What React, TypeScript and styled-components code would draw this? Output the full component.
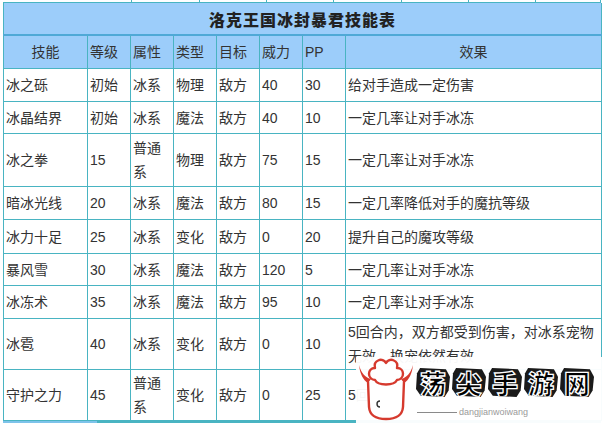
import React from "react";
import styled, { createGlobalStyle } from "styled-components";

const TEAL = "#49b4c2";
const BLUE_BG = "#9ccdfa";

const GlobalStyle = createGlobalStyle`
  html, body { margin: 0; padding: 0; background: #fff; }
  body { font-family: "Liberation Sans", "Noto Sans CJK SC", sans-serif; }
`;

const Page = styled.div`
  position: relative;
  width: 608px;
  height: 423px;
  overflow: hidden;
  background: #fff;
`;

const Tail = styled.div`
  display: flex;
  height: 2px;
  margin-left: 3px;
  width: 598px;
  border-bottom: 1px solid ${TEAL};
`;

const TailCell = styled.div<{ $w: number }>`
  flex: 0 0 ${(p) => p.$w}px;
  border-right: 1px solid ${TEAL};
  box-sizing: border-box;
`;

const Table = styled.table`
  border-collapse: collapse;
  table-layout: fixed;
  width: 598px;
  margin-left: 3px;
  font-size: 14px;
  color: #333;
`;

const TitleCell = styled.th`
  background: ${BLUE_BG};
  height: 31px;
  padding: 0;
  font-size: 16px;
  font-weight: 900;
  letter-spacing: 1px;
  color: #222;
  text-align: center;
  border: 1px solid ${TEAL};
  border-top: none;
  border-bottom: 2px solid #4fa9d6;
  font-family: "Noto Sans CJK SC", sans-serif;
`;

const HeadCell = styled.th<{ $center?: boolean }>`
  background: ${BLUE_BG};
  height: 32px;
  padding: 0 2px;
  font-weight: normal;
  color: #333;
  text-align: ${(p) => (p.$center ? "center" : "left")};
  border: 1px solid ${TEAL};
  line-height: 24px;
`;

const Row = styled.tr<{ $h: number }>`
  height: ${(p) => p.$h}px;
`;

const Cell = styled.td`
  padding: 1px 2px;
  border: 1px solid ${TEAL};
  line-height: 24px;
  vertical-align: middle;
  word-break: break-all;
  background: #fff;
`;

const BottomLine = styled.div`
  margin-left: 3px;
  width: 598px;
  height: 3px;
  background: linear-gradient(to right, #7ec3ea 0 94px, ${TEAL} 94px 100%);
`;

const Watermark = styled.div`
  position: absolute;
  left: 356px;
  top: 357px;
  width: 252px;
  height: 66px;
  background: rgba(255, 255, 255, 0.96);
`;

const LogoMark = styled.svg`
  position: absolute;
  left: 2px;
  top: 0;
`;

const Brand = styled.div`
  position: absolute;
  left: 60px;
  top: 11px;
  display: flex;
  gap: 2px;
`;

const Blob = styled.span`
  display: flex;
  align-items: center;
  justify-content: center;
  width: 34px;
  height: 29px;
  background: #1a1a1a;
  clip-path: polygon(12% 0, 88% 4%, 100% 30%, 96% 78%, 84% 100%, 14% 96%, 0 72%, 3% 18%);
  color: #000;
  -webkit-text-stroke: 1.3px #ffffff;
  font-family: "Noto Sans CJK SC", sans-serif;
  font-weight: 900;
  font-size: 26px;
  line-height: 1;
`;

const Domain = styled.div`
  position: absolute;
  left: 61px;
  top: 50px;
  display: flex;
  align-items: center;
  gap: 2px;
  font-size: 9px;
  line-height: 10px;
  color: #9a9a9a;
  font-family: "Liberation Sans", sans-serif;
`;

const Rule = styled.span`
  width: 40px;
  height: 1px;
  background: #8a8a8a;
`;

type Skill = { n: string; lv: string; attr: string; type: string; t: string; p: string; pp: string; e: string; h: number };

const skills: Skill[] = [
  { n: "冰之砾", lv: "初始", attr: "冰系", type: "物理", t: "敌方", p: "40", pp: "30", e: "给对手造成一定伤害", h: 33 },
  { n: "冰晶结界", lv: "初始", attr: "冰系", type: "魔法", t: "敌方", p: "40", pp: "10", e: "一定几率让对手冰冻", h: 32 },
  { n: "冰之拳", lv: "15", attr: "普通系", type: "物理", t: "敌方", p: "75", pp: "15", e: "一定几率让对手冰冻", h: 53 },
  { n: "暗冰光线", lv: "20", attr: "冰系", type: "魔法", t: "敌方", p: "80", pp: "15", e: "一定几率降低对手的魔抗等级", h: 33 },
  { n: "冰力十足", lv: "25", attr: "冰系", type: "变化", t: "敌方", p: "0", pp: "20", e: "提升自己的魔攻等级", h: 34 },
  { n: "暴风雪", lv: "30", attr: "冰系", type: "魔法", t: "敌方", p: "120", pp: "5", e: "一定几率让对手冰冻", h: 32 },
  { n: "冰冻术", lv: "35", attr: "冰系", type: "魔法", t: "敌方", p: "95", pp: "10", e: "一定几率让对手冰冻", h: 33 },
  { n: "冰雹", lv: "40", attr: "冰系", type: "变化", t: "敌方", p: "0", pp: "10", e: "5回合内，双方都受到伤害，对冰系宠物无效，换宠依然有效", h: 51 },
  { n: "守护之力", lv: "45", attr: "普通系", type: "变化", t: "敌方", p: "0", pp: "25", e: "5回合内", h: 51 },
];

const headers: { label: string; center?: boolean }[] = [
  { label: "技能", center: true },
  { label: "等级" },
  { label: "属性" },
  { label: "类型" },
  { label: "目标" },
  { label: "威力" },
  { label: "PP" },
  { label: "效果", center: true },
];

const colWidths = [84, 43, 43, 43, 43, 43, 43, 256];
const tailWidths = [129, 68, 67, 67, 68, 67, 67, 65];

export default function App() {
  return (
    <Page>
      <GlobalStyle />
      <Tail>
        {tailWidths.map((w, i) => (
          <TailCell key={i} $w={w} />
        ))}
      </Tail>
      <Table>
        <colgroup>
          {colWidths.map((w, i) => (
            <col key={i} style={{ width: w }} />
          ))}
        </colgroup>
        <thead>
          <tr>
            <TitleCell colSpan={8}>洛克王国冰封暴君技能表</TitleCell>
          </tr>
          <tr>
            {headers.map((h) => (
              <HeadCell key={h.label} $center={h.center}>
                {h.label}
              </HeadCell>
            ))}
          </tr>
        </thead>
        <tbody>
          {skills.map((s) => (
            <Row key={s.n} $h={s.h}>
              <Cell>{s.n}</Cell>
              <Cell>{s.lv}</Cell>
              <Cell>{s.attr}</Cell>
              <Cell>{s.type}</Cell>
              <Cell>{s.t}</Cell>
              <Cell>{s.p}</Cell>
              <Cell>{s.pp}</Cell>
              <Cell>{s.e}</Cell>
            </Row>
          ))}
        </tbody>
      </Table>
      <BottomLine />
      <Watermark>
        <LogoMark width="56" height="64" viewBox="0 0 56 64">
          <path d="M1 8 C3 16 8 21 13 22 L10 26 C5 23 2 17 1 8 Z" fill="#d63a2e" />
          <path d="M55 8 C53 16 48 21 43 22 L46 26 C51 23 54 17 55 8 Z" fill="#d63a2e" />
          <path
            d="M10 24 L11 50 Q12 62 28 62 Q44 62 45 50 L46 24"
            fill="#fff"
            stroke="#d63a2e"
            strokeWidth="2.4"
            strokeLinejoin="round"
          />
          <path
            d="M17 23 C9 22 9 11 17 11 C15 3 25 0 28 6 C31 0 41 3 39 11 C47 11 47 22 39 23 C36 29 20 29 17 23 Z"
            fill="#fff"
            stroke="#d63a2e"
            strokeWidth="2.4"
            strokeLinejoin="round"
          />
          <path d="M22 44 A3 3 0 1 0 22 50" fill="none" stroke="#333" strokeWidth="1.4" />
        </LogoMark>
        <Brand>
          {"荡尖手游网".split("").map((c) => (
            <Blob key={c}>{c}</Blob>
          ))}
        </Brand>
        <Domain>
          <Rule />
          dangjianwoiwang
        </Domain>
      </Watermark>
    </Page>
  );
}
